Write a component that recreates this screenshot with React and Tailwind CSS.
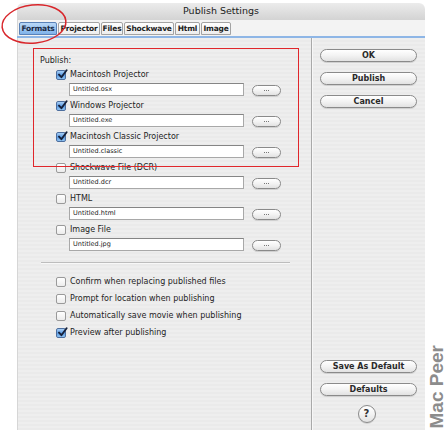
const FILES = [
  { label: 'Macintosh Projector', file: 'Untitled.osx', on: true },
  { label: 'Windows Projector', file: 'Untitled.exe', on: true },
  { label: 'Macintosh Classic Projector', file: 'Untitled.classic', on: true },
  { label: 'Shockwave File (DCR)', file: 'Untitled.dcr', on: false },
  { label: 'HTML', file: 'Untitled.html', on: false },
  { label: 'Image File', file: 'Untitled.jpg', on: false },
];

const OPTIONS = [
  { label: 'Confirm when replacing published files', on: false },
  { label: 'Prompt for location when publishing', on: false },
  { label: 'Automatically save movie when publishing', on: false },
  { label: 'Preview after publishing', on: true },
];

const TABS = [
  { name: 'Formats', w: 'w-[38px]', active: true },
  { name: 'Projector', w: 'w-[42px]' },
  { name: 'Files', w: 'w-[22px]' },
  { name: 'Shockwave', w: 'w-[50px]' },
  { name: 'Html', w: 'w-[25px]' },
  { name: 'Image', w: 'w-[30px]' },
];

function Check({ on }) {
  if (!on) {
    return (
      <span className="relative w-[10px] h-[10px] shrink-0 rounded-[2px] border border-[#9a9a9a] bg-gradient-to-b from-white to-[#ececec]" />
    );
  }
  return (
    <span className="relative w-[10px] h-[10px] shrink-0 rounded-[2px] border border-[#4d6e9e] bg-gradient-to-b from-[#a9d0f6] via-[#5b9be3] to-[#8ec2f2]">
      <svg className="absolute -top-[2px] left-0" width="11" height="11" viewBox="0 0 11 11">
        <path d="M2 5.6 L4.4 8.2 L9.6 1.2" fill="none" stroke="#15203a" strokeWidth="1.9" strokeLinecap="round" strokeLinejoin="round" />
      </svg>
    </span>
  );
}

function PillButton({ children, className = '' }) {
  return (
    <div className={`flex items-center justify-center rounded-full border border-[#8a8a8a] bg-gradient-to-b from-white via-[#f3f3f3] to-[#e2e2e2] shadow-[0_1px_0_#d0d0d0] ${className}`}>
      {children}
    </div>
  );
}

function FileRow({ label, file, on }) {
  return (
    <div className="flex flex-col h-[31px]">
      <div className="flex items-center h-[12px] ml-[38px] gap-[4px]">
        <Check on={on} />
        <span className="text-[8px] leading-[12px] text-[#1e1e1e]">{label}</span>
      </div>
      <div className="flex items-center mt-[2px] ml-[51px]">
        <div className="w-[175px] h-[13px] bg-white border border-[#a8a8a8] border-t-[#858585] px-[3px] text-[6.5px] leading-[11px] text-[#222]">
          {file}
        </div>
        <PillButton className="ml-[8px] mt-[1px] w-[29px] h-[11px] gap-[1px]">
          <span className="w-px h-px bg-[#777]" />
          <span className="w-px h-px bg-[#777]" />
          <span className="w-px h-px bg-[#777]" />
        </PillButton>
      </div>
    </div>
  );
}

export default function App() {
  return (
    <div className="relative w-[447px] h-[430px] bg-white overflow-hidden flex" style={{ fontFamily: '"DejaVu Sans", "Noto Sans", sans-serif' }}>
      <div className="w-[17px] shrink-0" />

      {/* window */}
      <div className="w-[408px] shrink-0 mt-[3px] flex flex-col">
        <div className="h-[17px] rounded-t-[6px] bg-gradient-to-b from-[#ececec] to-[#d3d3d3] flex items-center justify-center">
          <span className="text-[9.5px] text-[#222]">Publish Settings</span>
        </div>

        <div className="h-[16px] bg-[#f3f3f3] border-l border-[#d6d6d6] pt-[2px] pl-[1px] flex gap-[1px]">
          {TABS.map(t => (
            <div
              key={t.name}
              className={`${t.w} h-[13px] flex items-center justify-center rounded-t-[2px] border text-[7.5px] font-bold leading-none tracking-[-0.2px] ${
                t.active
                  ? 'border-[#5a82b8] bg-gradient-to-b from-[#b9d8f7] to-[#7fb2ea] text-[#1a2a44]'
                  : 'border-[#a3a3a3] bg-gradient-to-b from-white to-[#ededed] text-[#222]'
              }`}
            >
              {t.name}
            </div>
          ))}
        </div>
        <div className="h-[2px] bg-[#8eb6e6]" />

        <div className="flex-1 flex border-l border-[#d6d6d6] bg-[repeating-linear-gradient(180deg,#eeeeee_0px,#eeeeee_2px,#eaeaea_2px,#eaeaea_4px)]">
          {/* left pane */}
          <div className="w-[293px] flex flex-col">
            <div className="ml-[22px] mt-[17px] h-[12px] text-[8px] leading-[12px] text-[#1e1e1e]">Publish:</div>
            <div className="mt-[2px] flex flex-col">
              {FILES.map(f => (
                <FileRow key={f.label} {...f} />
              ))}
            </div>
            <div className="ml-[23px] mr-[21px] mt-[7px] h-[2px] border-t border-[#bdbdbd] border-b border-b-[#f8f8f8]" />
            <div className="mt-[9px] flex flex-col">
              {OPTIONS.map(o => (
                <div key={o.label} className="flex items-center h-[17px] ml-[38px] gap-[4px]">
                  <Check on={o.on} />
                  <span className="text-[8px] leading-[12px] text-[#1e1e1e]">{o.label}</span>
                </div>
              ))}
            </div>
          </div>

          <div className="w-[2px] border-l border-[#a9a9a9] border-r border-r-[#f7f7f7]" />

          {/* right pane */}
          <div className="flex-1 flex flex-col pl-[7px] pr-[8px] pt-[11px] pb-[7px]">
            {['OK', 'Publish', 'Cancel'].map(b => (
              <PillButton key={b} className="h-[13px] mb-[10px]">
                <span className="text-[8px] font-bold text-[#2a2a2a] leading-none">{b}</span>
              </PillButton>
            ))}
            <div className="flex-1" />
            <PillButton className="h-[13px]">
              <span className="text-[8px] font-bold text-[#2a2a2a] leading-none">Save As Default</span>
            </PillButton>
            <PillButton className="h-[13px] mt-[10px]">
              <span className="text-[8px] font-bold text-[#2a2a2a] leading-none">Defaults</span>
            </PillButton>
            <div className="flex justify-center mt-[9px] pr-[4px]">
              <PillButton className="w-[18px] h-[18px]">
                <span className="text-[10px] font-bold text-[#333] leading-none">?</span>
              </PillButton>
            </div>
          </div>
        </div>
      </div>

      {/* watermark */}
      <div className="flex-1 flex items-end justify-center pb-[2px]">
        <span
          className="rotate-180 [writing-mode:vertical-rl] text-[19px] font-bold leading-none text-[#8c8c8c]"
          style={{ fontFamily: '"Liberation Sans", Arial, sans-serif' }}
        >
          Mac Peer
        </span>
      </div>

      {/* annotations */}
      <div className="absolute left-[33px] top-[48px] w-[266px] h-[119px] border-[1.5px] border-[#e0262b]" />
      <svg className="absolute left-0 top-0" width="80" height="50" viewBox="0 0 80 50">
        <ellipse cx="34" cy="24" rx="32" ry="19" fill="none" stroke="#d8262b" strokeWidth="1.5" transform="rotate(-6 34 24)" />
      </svg>
    </div>
  );
}
